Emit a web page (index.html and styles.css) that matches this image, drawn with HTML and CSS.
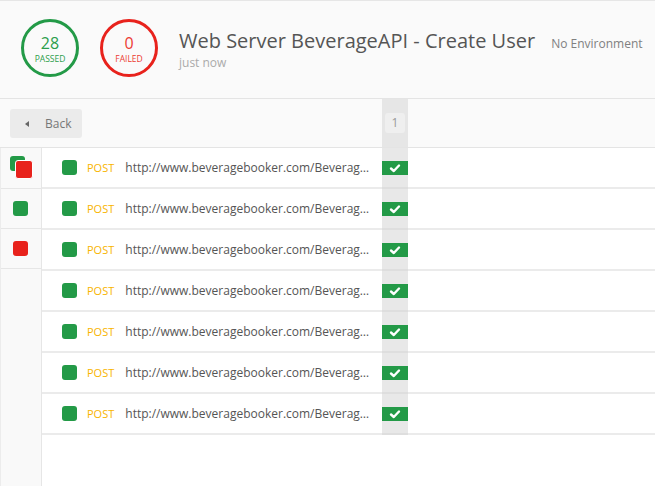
FILE: index.html
```html
<!DOCTYPE html>
<html>
<head>
<meta charset="utf-8">
<link rel="stylesheet" href="styles.css">
</head>
<body>
<div class="page">
  <header class="header">
    <div class="stat stat-pass"><span class="stat-num">28</span><span class="stat-label">PASSED</span></div>
    <div class="stat stat-fail"><span class="stat-num">0</span><span class="stat-label">FAILED</span></div>
    <div class="title-block">
      <div class="title-row">
        <h1 class="title">Web Server BeverageAPI - Create User</h1>
        <span class="env">No Environment</span>
      </div>
      <div class="time">just now</div>
    </div>
  </header>

  <div class="toolbar">
    <div class="tb-main">
      <button class="back"><span class="tri"></span>Back</button>
    </div>
    <div class="tb-col"><span class="badge">1</span></div>
    <div class="tb-rest"></div>
  </div>

  <div class="body">
    <aside class="sidebar">
      <div class="side-item"><span class="mix"><span class="sq sq-green"></span><span class="sq sq-red sq-over"></span></span></div>
      <div class="side-item"><span class="sq sq-green"></span></div>
      <div class="side-item"><span class="sq sq-red"></span></div>
    </aside>
    <div class="list">
      <div class="row"><div class="req"><span class="dot"></span><span class="method">POST</span><span class="url">http://www.beveragebooker.com/BeverageAPI/api/users</span></div><div class="res"><span class="ok"><svg viewBox="0 0 26 14" width="26" height="14"><polyline points="9,7.5 11.8,10 17,4.5" fill="none" stroke="#fff" stroke-width="2.4" stroke-linecap="round" stroke-linejoin="round"/></svg></span></div><div class="rest"></div></div>
      <div class="row"><div class="req"><span class="dot"></span><span class="method">POST</span><span class="url">http://www.beveragebooker.com/BeverageAPI/api/users</span></div><div class="res"><span class="ok"><svg viewBox="0 0 26 14" width="26" height="14"><polyline points="9,7.5 11.8,10 17,4.5" fill="none" stroke="#fff" stroke-width="2.4" stroke-linecap="round" stroke-linejoin="round"/></svg></span></div><div class="rest"></div></div>
      <div class="row"><div class="req"><span class="dot"></span><span class="method">POST</span><span class="url">http://www.beveragebooker.com/BeverageAPI/api/users</span></div><div class="res"><span class="ok"><svg viewBox="0 0 26 14" width="26" height="14"><polyline points="9,7.5 11.8,10 17,4.5" fill="none" stroke="#fff" stroke-width="2.4" stroke-linecap="round" stroke-linejoin="round"/></svg></span></div><div class="rest"></div></div>
      <div class="row"><div class="req"><span class="dot"></span><span class="method">POST</span><span class="url">http://www.beveragebooker.com/BeverageAPI/api/users</span></div><div class="res"><span class="ok"><svg viewBox="0 0 26 14" width="26" height="14"><polyline points="9,7.5 11.8,10 17,4.5" fill="none" stroke="#fff" stroke-width="2.4" stroke-linecap="round" stroke-linejoin="round"/></svg></span></div><div class="rest"></div></div>
      <div class="row"><div class="req"><span class="dot"></span><span class="method">POST</span><span class="url">http://www.beveragebooker.com/BeverageAPI/api/users</span></div><div class="res"><span class="ok"><svg viewBox="0 0 26 14" width="26" height="14"><polyline points="9,7.5 11.8,10 17,4.5" fill="none" stroke="#fff" stroke-width="2.4" stroke-linecap="round" stroke-linejoin="round"/></svg></span></div><div class="rest"></div></div>
      <div class="row"><div class="req"><span class="dot"></span><span class="method">POST</span><span class="url">http://www.beveragebooker.com/BeverageAPI/api/users</span></div><div class="res"><span class="ok"><svg viewBox="0 0 26 14" width="26" height="14"><polyline points="9,7.5 11.8,10 17,4.5" fill="none" stroke="#fff" stroke-width="2.4" stroke-linecap="round" stroke-linejoin="round"/></svg></span></div><div class="rest"></div></div>
      <div class="row"><div class="req"><span class="dot"></span><span class="method">POST</span><span class="url">http://www.beveragebooker.com/BeverageAPI/api/users</span></div><div class="res"><span class="ok"><svg viewBox="0 0 26 14" width="26" height="14"><polyline points="9,7.5 11.8,10 17,4.5" fill="none" stroke="#fff" stroke-width="2.4" stroke-linecap="round" stroke-linejoin="round"/></svg></span></div><div class="rest"></div></div>
    </div>
  </div>
</div>
</body>
</html>
```

FILE: styles.css
```css
* { box-sizing: border-box; }
html, body { margin: 0; padding: 0; }
body {
  font-family: "Open Sans", "Liberation Sans", sans-serif;
  color: #555;
  background: #fff;
  overflow: hidden;
}
.page {
  display: flex;
  flex-direction: column;
  height: 486px;
}

/* header */
.header {
  height: 99px;
  flex: none;
  background: #fafafa;
  border-top: 1px solid #e6e6e6;
  border-bottom: 1px solid #e4e4e4;
  display: flex;
  align-items: flex-start;
  padding: 18px 0 0 21px;
  gap: 21px;
}
.stat {
  width: 58px;
  height: 58px;
  border-radius: 50%;
  border: 3px solid;
  display: flex;
  flex-direction: column;
  align-items: center;
  justify-content: center;
  flex: none;
}
.stat-pass { border-color: #239a47; color: #2c9e4c; }
.stat-fail { border-color: #e8221c; color: #ec3a33; }
.stat-num {
  font-size: 16px;
  line-height: 18px;
  margin-top: 2px;
}
.stat-label {
  font-size: 8.5px;
  line-height: 10px;
  margin-top: 2px;
}
.title-block {
  margin-top: 8px;
}
.title-row {
  display: flex;
  align-items: baseline;
}
.title {
  margin: 0;
  font-size: 20px;
  font-weight: 400;
  line-height: 28px;
  color: #555;
}
.env {
  margin-left: 16px;
  font-size: 12px;
  color: #808080;
}
.time {
  font-size: 12px;
  line-height: 16px;
  color: #aaa;
}

/* toolbar */
.toolbar {
  height: 49px;
  flex: none;
  display: flex;
  background: #fafafa;
  border-bottom: 1px solid #e4e4e4;
}
.tb-main {
  width: 382px;
  padding: 10px 0 0 10px;
}
.back {
  width: 72px;
  height: 29px;
  border: 0;
  border-radius: 3px;
  background: #ebebeb;
  font-family: inherit;
  font-size: 12px;
  color: #777;
  display: flex;
  align-items: center;
  padding: 0 0 0 15px;
  gap: 16px;
}
.tri {
  width: 0;
  height: 0;
  border-top: 3.5px solid transparent;
  border-bottom: 3.5px solid transparent;
  border-right: 4px solid #666;
}
.tb-col {
  width: 26px;
  background: #e6e6e6;
  display: flex;
  justify-content: center;
  padding-top: 14px;
}
.badge {
  width: 20px;
  height: 20px;
  border-radius: 3px;
  background: #efefef;
  color: #999;
  font-size: 12px;
  line-height: 20px;
  text-align: center;
}
.tb-rest { flex: 1; }

/* body */
.body {
  flex: 1;
  display: flex;
}
.sidebar {
  width: 42px;
  flex: none;
  background: #f9f9f9;
  border-left: 1px solid #ececec;
  border-right: 1px solid #e6e6e6;
}
.side-item {
  height: 40px;
  border-bottom: 1px solid #e6e6e6;
  display: flex;
  align-items: center;
  justify-content: center;
  padding-right: 1px;
}
.side-item:first-child { height: 41px; }
.sq {
  display: block;
  width: 15px;
  height: 15px;
  border-radius: 3px;
}
.sq-green { background: #239a47; }
.sq-red { background: #e8221c; }
.mix {
  display: block;
  position: relative;
  width: 24px;
  height: 24px;
  margin-left: 2px;
}
.mix .sq-green {
  position: absolute;
  left: 0;
  top: 0;
}
.sq-over {
  position: absolute;
  left: 5px;
  top: 4px;
  width: 18px;
  height: 19px;
  border: 1.5px solid #fff;
}

.list {
  flex: 1;
  background: #fff;
}
.row {
  height: 41px;
  display: grid;
  grid-template-columns: 340px 26px 1fr;
  border-bottom: 2px solid #ebebeb;
}
.req {
  display: flex;
  align-items: center;
  padding-left: 20px;
  min-width: 0;
  white-space: nowrap;
}
.dot {
  width: 15px;
  height: 15px;
  border-radius: 3px;
  background: #239a47;
  flex: none;
}
.method {
  margin-left: 10px;
  font-size: 11px;
  color: #f8b400;
  flex: none;
}
.url {
  margin-left: 11px;
  font-size: 12px;
  color: #555;
  overflow: hidden;
  text-overflow: ellipsis;
  padding-right: 11px;
}
.res {
  background: #e8e8e8;
  display: flex;
  align-items: center;
  margin-bottom: -2px;
  border-bottom: 2px solid #dedede;
}
.ok {
  display: block;
  width: 26px;
  height: 14px;
  background: #239a47;
  margin-top: 1px;
}
.ok svg { display: block; }
```
